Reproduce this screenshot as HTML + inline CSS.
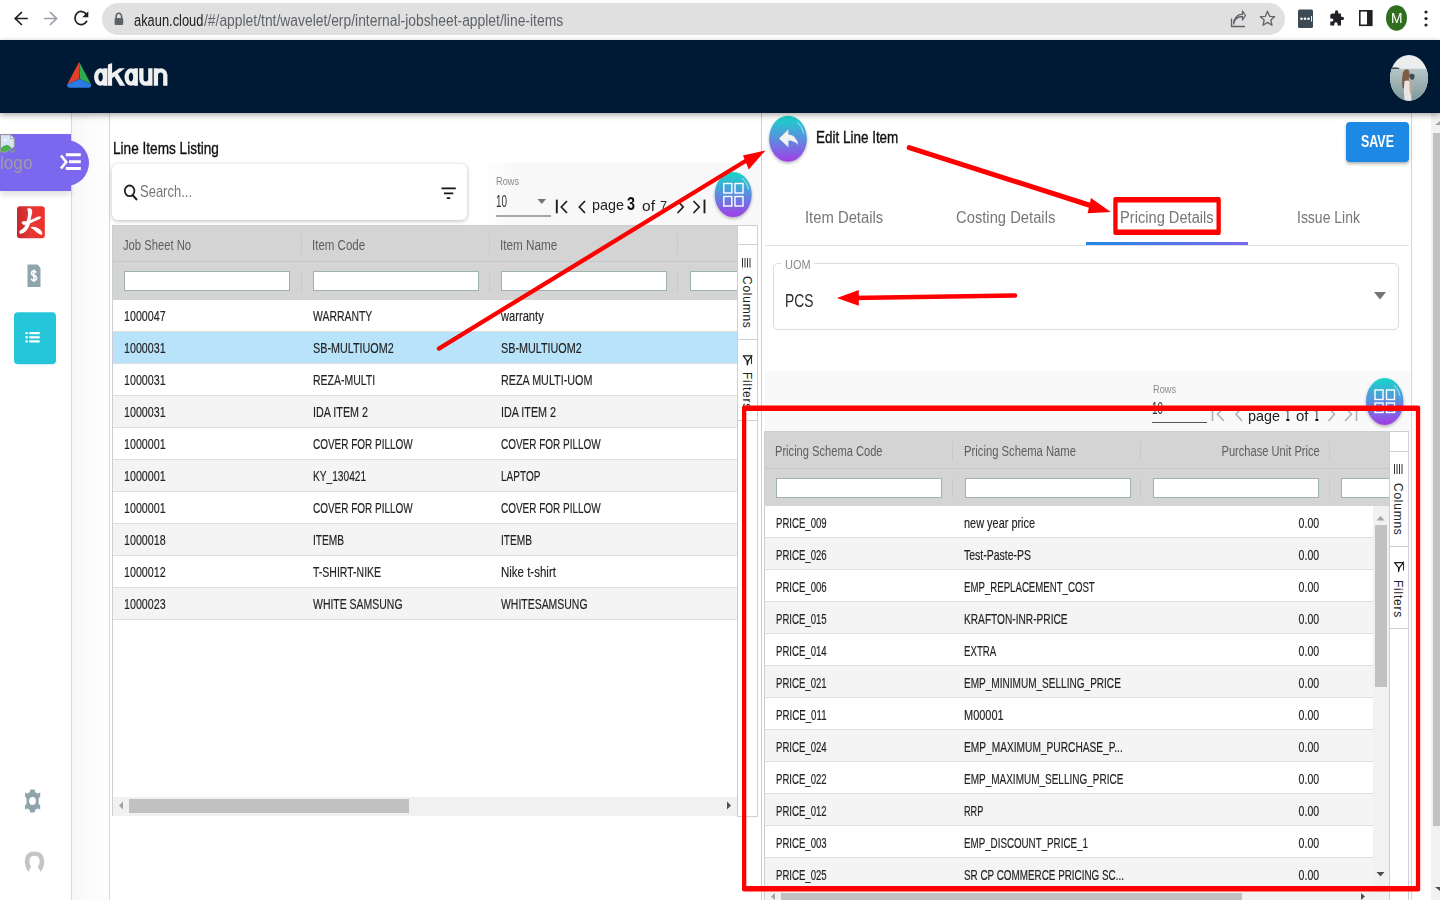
<!DOCTYPE html><html><head><meta charset="utf-8"><style>
html,body{margin:0;padding:0;width:1440px;height:900px;overflow:hidden;background:#fff;}
body{position:relative;font-family:"Liberation Sans",sans-serif;}
body div{position:absolute;box-sizing:border-box;}
.t{white-space:nowrap;transform-origin:left top;}
svg{position:absolute;overflow:visible;}
</style></head><body>
<div style="left:0px;top:0px;width:1440px;height:40px;background:#fff;"></div>
<svg style="left:0;top:0" width="1440" height="40" viewBox="0 0 1440 40">
<g fill="none" stroke-linecap="square">
<path d="M27 18.5H15.5M21.3 12.6L15.2 18.5L21.3 24.4" stroke="#202124" stroke-width="1.7"/>
<path d="M44.8 18.5H56.3M50.5 12.6L56.6 18.5L50.5 24.4" stroke="#9aa0a6" stroke-width="1.7"/>
<path d="M86.5 21.5A6.2 6.6 0 1 1 86.4 14.5" stroke="#202124" stroke-width="1.7"/>
</g>
<path d="M88.3 11.3V17.3H82.3Z" fill="#202124"/>
</svg>
<div style="left:102px;top:3px;width:1183px;height:32px;background:#e0e0e0;border-radius:16px;"></div>
<svg style="left:0;top:0" width="1440" height="40" viewBox="0 0 1440 40">
<rect x="114.6" y="18" width="8.6" height="7" rx="1" fill="#5f6368"/>
<path d="M116.2 18.5V16.3A2.7 3 0 0 1 121.6 16.3V18.5" fill="none" stroke="#5f6368" stroke-width="1.6"/>
</svg>
<div class="t" style="left:134.00px;top:11.50px;font-size:16.42px;line-height:16.42px;color:#202124;transform:scaleX(0.7846);">akaun.cloud</div>
<div class="t" style="left:203.80px;top:11.50px;font-size:16.42px;line-height:16.42px;color:#5f6368;transform:scaleX(0.8450);">/#/applet/tnt/wavelet/erp/internal-jobsheet-applet/line-items</div>
<svg style="left:0;top:0" width="1440" height="40" viewBox="0 0 1440 40">
<g fill="none" stroke="#5f6368" stroke-width="1.3">
<path d="M1231.5 18.5V26.5H1245"/>
<path d="M1233.5 24C1234.5 19 1238 16.5 1242.5 16.5V20L1245.5 15.5L1242.5 11V14.2C1237 14.5 1234 18.5 1233.5 24Z" stroke-linejoin="round"/>
<path d="M1267.5 11.2L1269.6 16.3L1274.6 16.7L1270.8 20L1272 25.3L1267.5 22.4L1263 25.3L1264.2 20L1260.4 16.7L1265.4 16.3Z" stroke-linejoin="round"/>
</g>
<rect x="1298" y="9.5" width="15" height="18.5" rx="1.5" fill="#3c4a55"/>
<circle cx="1301.5" cy="18.8" r="1.3" fill="#fff"/><circle cx="1305" cy="18.8" r="1.3" fill="#fff"/><circle cx="1308.5" cy="18.8" r="1.3" fill="#fff"/>
<rect x="1311" y="16" width="0.9" height="5.5" fill="#fff"/>
<path d="M1332 13.5H1335V11.8A1.6 1.6 0 0 1 1338.2 11.8V13.5H1341V16.8H1342.4A1.6 1.6 0 0 1 1342.4 20H1341V25.5H1337.5V23.8A1.6 1.6 0 0 0 1334.3 23.8V25.5H1330.3V21.6H1331.8A1.6 1.6 0 0 0 1331.8 18.4H1330.3V14.8Z" fill="#202124"/>
<rect x="1359.8" y="10.8" width="12" height="14.5" fill="none" stroke="#202124" stroke-width="1.6"/>
<rect x="1367" y="10.8" width="4.8" height="14.5" fill="#202124"/>
<ellipse cx="1396.5" cy="18" rx="10.5" ry="12.8" fill="#2f6e1f"/>
<circle cx="1426" cy="12" r="1.6" fill="#202124"/><circle cx="1426" cy="18.5" r="1.6" fill="#202124"/><circle cx="1426" cy="25" r="1.6" fill="#202124"/>
</svg>
<div class="t" style="left:1390.50px;top:12.01px;font-size:13.81px;line-height:13.81px;color:#fff;transform:scaleX(0.9998);">M</div>
<div style="left:0px;top:40px;width:1440px;height:73px;background:#001a35;box-shadow:0 2px 6px rgba(0,0,0,.35);z-index:2;"></div>
<svg style="left:0;top:0;z-index:3" width="1440" height="120" viewBox="0 0 1440 120">
<path d="M79.2 61.8L67.3 84.2L79 79Z" fill="#e0402a"/>
<path d="M79.2 61.8L91 84.2L79.6 79Z" fill="#2fa84f"/>
<path d="M67.3 84.2Q66.8 87.8 70 87.8H88.6Q91.6 87.8 91 84.2L79.4 79Z" fill="#2c7be5"/>
<defs><clipPath id="avc"><ellipse cx="1409" cy="77.9" rx="19" ry="22.9"/></clipPath>
<linearGradient id="sea" x1="0" y1="0" x2="0" y2="1"><stop offset="0" stop-color="#b6c6c8"/><stop offset="1" stop-color="#7b9598"/></linearGradient></defs>
<g clip-path="url(#avc)">
<rect x="1389" y="54" width="40" height="48" fill="#eceeed"/>
<rect x="1389" y="68.8" width="40" height="34" fill="url(#sea)"/>
<path d="M1391 69H1400Q1399 67.2 1396.5 67.5Q1394 67 1391 68Z" fill="#40524f"/>
<path d="M1402.5 88Q1401.5 78 1403 72Q1405 68.5 1408 69.5Q1410 71 1409.5 76L1408 84Q1406 90 1402.5 88Z" fill="#7d5e45"/>
<path d="M1404.5 81Q1408 79.5 1410.5 82L1411 92L1411.5 101H1404.5L1403.8 90Z" fill="#e9e5e6"/>
<path d="M1409.3 75Q1412 72.5 1414.5 75Q1415 78.5 1412.5 80Q1409.5 79.5 1409.3 75Z" fill="#3e4c4e"/>
<path d="M1409.5 80.5Q1412.5 80 1412.3 86L1411.5 96Q1409.5 94 1409.5 86Z" fill="#c4a48c"/>
</g>
</svg>
<svg style="left:0;top:0;z-index:3" width="200" height="120" viewBox="0 0 200 120">
<g fill="none" stroke="#f0f0f0" stroke-width="4.3">
<ellipse cx="100.6" cy="77.05" rx="4.4" ry="6.6"/>
<ellipse cx="131" cy="77.05" rx="4.4" ry="6.6"/>
<path d="M141.35 68.3V79.2A4.5 4.5 0 0 0 150.35 79.2M150.35 68.3V85.8"/>
<path d="M155.9 68.3V85.8M155.9 75A4.7 4.7 0 0 1 165.3 75V85.8"/>
</g>
<g fill="#f0f0f0">
<rect x="103.2" y="68.3" width="4.3" height="17.5"/>
<rect x="133.6" y="68.3" width="4.3" height="17.5"/>
<path d="M107.9 64.6L112.1 62.9V85.8H107.9Z"/>
<path d="M110.5 79.5V74.3L119.3 68.3H125Z"/>
<path d="M114.3 76.2L117.6 73.2L125.3 85.8H119.9Z"/>
</g>
</svg>
<div style="left:0px;top:112px;width:72px;height:788px;background:#fff;border-right:1px solid #d9d9d9;"></div>
<div style="left:72px;top:112px;width:37px;height:788px;background:linear-gradient(90deg,#f7f7f7,#fbfbfb 40%,#fefefe);"></div>
<div style="left:109px;top:112px;width:1px;height:788px;background:#d9d9d9;"></div>
<div style="left:0px;top:134px;width:71px;height:57px;background:#7b68ee;box-shadow:0 4px 6px rgba(0,0,0,.12);"></div>
<div style="left:43px;top:139.5px;width:46px;height:46px;border-radius:50%;background:#7b68ee;"></div>
<svg style="left:0;top:0" width="120" height="400" viewBox="0 0 120 400">
<path d="M65.8 154.8H80.8M69 161.8H80.8M65.8 168.5H80.8" stroke="#fff" stroke-width="3"/>
<path d="M61 155.5L66.2 162L61 168.5" fill="none" stroke="#fff" stroke-width="2.7"/>
<path d="M0.5 134.7H10.6L14.3 138.6V147L6 152.1H0.5Z" fill="#d6e4f5" stroke="#9a9a9a" stroke-width="1"/>
<path d="M10.6 134.7V138.6H14.3Z" fill="#f4f4f4" stroke="#9a9a9a" stroke-width="0.8"/>
<path d="M3 140.5Q5 137.5 7.5 140.5Z" fill="#fff"/>
<path d="M1 151.8V148Q4 144.5 7.5 145Q10 145.5 11.5 148.2L6 151.8Z" fill="#4caf50"/>
<path d="M10.5 152.1L14.3 149.5V152.1Z" fill="#4caf50" stroke="#9a9a9a" stroke-width="0.7"/>

</svg>
<div class="t" style="left:-0.50px;top:153.59px;font-size:18.38px;line-height:18.38px;color:#9e9e9e;transform:scaleX(0.9352);">logo</div>
<svg style="left:0;top:0" width="120" height="900" viewBox="0 0 120 900">
<defs><linearGradient id="rg" x1="0" x2="1"><stop offset="0" stop-color="#c62828"/><stop offset=".5" stop-color="#e53935"/><stop offset="1" stop-color="#f0302a"/></linearGradient></defs>
<rect x="17" y="206.2" width="27.8" height="32.1" rx="3" fill="url(#rg)"/>
<path d="M28 209C30.5 208.2 32 210 31.5 212.5C31.2 214.5 30.5 216 30.2 218C30 222 28.5 227 26 230C24.5 231.8 22.5 233.2 20.2 233C19.8 231.5 20.5 230.5 22 230.2C24.5 229 26.5 225 27.5 221C28.2 218 28.8 215 28.8 213C28.6 211.2 28 210 28 209Z" fill="#fff" stroke="#fff" stroke-width="1.3"/>
<path d="M22 222.5C22.5 221.2 24 221.5 25.5 221.8C29 221.5 34 219 37 217.5C38.8 216.6 40.5 216.5 40.8 217.3C40.5 218.5 38.5 219.2 36.5 220C33 221.5 29 223.5 26 224.5C24 225 22.5 224.5 22 222.5Z" fill="#fff" stroke="#fff" stroke-width="0.9"/>
<path d="M31.6 227.5C34 227 37.5 228 40 230.2C41.5 231.5 42 233 41.8 234.3C40.5 234.5 39 233.5 37.5 232.3C35.5 230.5 33.5 229 31.6 227.5Z" fill="#fff" stroke="#fff" stroke-width="1.1"/>
<path d="M27.5 264.5H37.5L40.5 268V287H27.5Z" fill="#90a4ae"/>
<path d="M36.3 272.6Q35.5 271 33.8 271Q31.5 271 31.5 273.2Q31.5 275 34 275.5Q36.5 276 36.5 278.3Q36.5 280.5 33.8 280.5Q32 280.5 31.2 278.8M33.9 269.5V282" fill="none" stroke="#fff" stroke-width="1.6"/>
<rect x="14" y="312.3" width="42" height="52" rx="4" fill="#26c6da"/>
<g fill="#fff"><rect x="25.5" y="332" width="2.2" height="2.2"/><rect x="25.5" y="336.2" width="2.2" height="2.2"/><rect x="25.5" y="340.3" width="2.2" height="2.2"/>
<rect x="29.3" y="332" width="10.4" height="2.2"/><rect x="29.3" y="336.2" width="10.4" height="2.2"/><rect x="29.3" y="340.3" width="10.4" height="2.2"/></g>
<path d="M30.3 789.5H34.6L35.2 792.2L37.6 793.6L40.2 792.6V796.8L38.6 798.2V803.8L40.2 805.2V809.6L37.6 808.6L35.2 810L34.6 812.6H30.3L29.7 810L27.3 808.6L25 809.6V805.5L26.5 803.8V798.2L25 796.5V792.6L27.3 793.6L29.7 792.2Z" fill="#90a4ae"/>
<ellipse cx="32.5" cy="801" rx="3.4" ry="4" fill="#fff"/>
<path d="M28.5 871.8Q24.8 867.5 24.8 861.5Q25 851.6 34.5 851.6Q44 851.6 44.2 861.5Q44.2 867.5 40.5 871.8L37.8 866.8Q39.8 864.5 39.6 860.8Q39.2 855.8 34.5 855.8Q29.8 855.8 29.4 860.8Q29.2 864.5 31.2 866.8Z" fill="#c4c4c4"/>
</svg>
<div class="t" style="left:112.50px;top:139.78px;font-size:17.15px;line-height:17.15px;color:#111;transform:scaleX(0.7942);-webkit-text-stroke:0.35px #111;">Line Items Listing</div>
<div style="left:112px;top:164px;width:355px;height:56px;background:#fff;border-radius:6px;box-shadow:0 1px 4px rgba(0,0,0,.28);"></div>
<svg style="left:0;top:0" width="760" height="240" viewBox="0 0 760 240">
<ellipse cx="129.6" cy="190.8" rx="4.8" ry="5.3" fill="none" stroke="#222" stroke-width="1.8"/>
<path d="M132.6 195L137 200" stroke="#222" stroke-width="2"/>
<path d="M441.5 188.4H455.8M444 193.3H453.3M446.8 198.1H450.2" stroke="#151515" stroke-width="1.8"/>
</svg>
<div class="t" style="left:140.00px;top:184.47px;font-size:15.99px;line-height:15.99px;color:#777;transform:scaleX(0.8127);">Search...</div>
<div style="left:480px;top:163px;width:280px;height:62px;background:linear-gradient(90deg,#fff,#f8f8f8 12%,#f8f8f8);"></div>
<div class="t" style="left:496.00px;top:175.95px;font-size:11.05px;line-height:11.05px;color:#8a8a8a;transform:scaleX(0.8327);">Rows</div>
<div class="t" style="left:496.00px;top:193.55px;font-size:16.72px;line-height:16.72px;color:#333;transform:scaleX(0.5916);">10</div>
<div style="left:496px;top:215.3px;width:55px;height:1.6px;background:#a8a8a8;"></div>
<svg style="left:0;top:0" width="760" height="240" viewBox="0 0 760 240">
<path d="M537.5 199H546L541.8 204Z" fill="#757575"/>
<g fill="none" stroke="#1e1e1e" stroke-width="1.9">
<path d="M556.8 199.6V213.3"/><path d="M567 201L561.3 207L567 213" stroke-width="1.7"/>
<path d="M585 201L579.3 207L585 213" stroke-width="1.7"/>
<path d="M677.5 201L683.2 207L677.5 213" stroke-width="1.7"/>
<path d="M693.5 201L699.2 207L693.5 213" stroke-width="1.7"/><path d="M704.5 199.6V213.3"/>
</g>
</svg>
<div class="t" style="left:592.00px;top:198.43px;font-size:14.97px;line-height:14.97px;color:#222;transform:scaleX(0.9608);">page</div>
<div class="t" style="left:627.00px;top:196.34px;font-size:17.44px;line-height:17.44px;color:#111;font-weight:700;transform:scaleX(0.8247);">3</div>
<div class="t" style="left:642.00px;top:198.92px;font-size:14.39px;line-height:14.39px;color:#222;transform:scaleX(1.0833);">of</div>
<div class="t" style="left:660.00px;top:198.55px;font-size:14.83px;line-height:14.83px;color:#222;transform:scaleX(0.8489);">7</div>
<svg style="left:0;top:0" width="760" height="240" viewBox="0 0 760 240">
<defs><linearGradient id="fg" x1="0" y1="0" x2="0" y2="1"><stop offset="0" stop-color="#14d8c8"/><stop offset=".5" stop-color="#5b8ee0"/><stop offset="1" stop-color="#a23de6"/></linearGradient>
<filter id="sh" x="-30%" y="-30%" width="160%" height="160%"><feDropShadow dx="0" dy="1.5" stdDeviation="1.5" flood-color="#000" flood-opacity=".3"/></filter></defs>
<ellipse cx="733.2" cy="194.6" rx="18.5" ry="22.5" fill="url(#fg)" filter="url(#sh)"/>
<g fill="none" stroke="#fff" stroke-width="1.4">
<rect x="723.8" y="183.5" width="8" height="9.5"/><rect x="735" y="183.5" width="8" height="9.5"/>
<rect x="723.8" y="196.5" width="8" height="9.5"/><rect x="735" y="196.5" width="8" height="9.5"/>
</g>
<path d="M742.4 178.2A16 20 0 0 1 748.7 189.4" fill="none" stroke="#fff" stroke-opacity=".7" stroke-width="0.9"/>
</svg>
<div style="left:112px;top:225px;width:626px;height:591px;background:#fff;border:1px solid #c9cfd2;border-right:none;"></div>
<div style="left:113px;top:225.5px;width:625px;height:36.5px;background:#d4d4d4;border-bottom:1px solid #c3c8ca;"></div>
<div style="left:113px;top:262px;width:625px;height:37.5px;background:#d4d4d4;"></div>
<div style="left:301px;top:234px;width:1px;height:20px;background:#c5cacc;"></div>
<div style="left:301px;top:272px;width:1px;height:20px;background:#c5cacc;"></div>
<div style="left:489px;top:234px;width:1px;height:20px;background:#c5cacc;"></div>
<div style="left:489px;top:272px;width:1px;height:20px;background:#c5cacc;"></div>
<div style="left:677px;top:234px;width:1px;height:20px;background:#c5cacc;"></div>
<div style="left:677px;top:272px;width:1px;height:20px;background:#c5cacc;"></div>
<div class="t" style="left:123.20px;top:237.64px;font-size:14.24px;line-height:14.24px;color:#5e5e5e;transform:scaleX(0.7898);">Job Sheet No</div>
<div class="t" style="left:312.00px;top:237.64px;font-size:14.24px;line-height:14.24px;color:#5e5e5e;transform:scaleX(0.8094);">Item Code</div>
<div class="t" style="left:500.20px;top:237.64px;font-size:14.24px;line-height:14.24px;color:#5e5e5e;transform:scaleX(0.8236);">Item Name</div>
<div style="left:124px;top:270.5px;width:166px;height:20.2px;background:#fff;border:1px solid #9fb1b1;"></div>
<div style="left:313px;top:270.5px;width:166px;height:20.2px;background:#fff;border:1px solid #9fb1b1;"></div>
<div style="left:501px;top:270.5px;width:166px;height:20.2px;background:#fff;border:1px solid #9fb1b1;"></div>
<div style="left:690px;top:270.5px;width:60px;height:20.2px;background:#fff;border:1px solid #9fb1b1;"></div>
<div style="left:113px;top:299.5px;width:625px;height:32px;background:#fff;border-bottom:1px solid #dedede;"></div>
<div class="t" style="left:124.30px;top:309.59px;font-size:13.95px;line-height:13.95px;color:#222;transform:scaleX(0.7661);-webkit-text-stroke:0.15px #222;">1000047</div>
<div class="t" style="left:312.60px;top:309.59px;font-size:13.95px;line-height:13.95px;color:#222;transform:scaleX(0.7476);-webkit-text-stroke:0.15px #222;">WARRANTY</div>
<div class="t" style="left:500.80px;top:309.59px;font-size:13.95px;line-height:13.95px;color:#222;transform:scaleX(0.7991);-webkit-text-stroke:0.15px #222;">warranty</div>
<div style="left:113px;top:331.5px;width:625px;height:32px;background:#b8e3fb;border-bottom:1px solid #dedede;"></div>
<div class="t" style="left:124.30px;top:341.59px;font-size:13.95px;line-height:13.95px;color:#222;transform:scaleX(0.7661);-webkit-text-stroke:0.15px #222;">1000031</div>
<div class="t" style="left:312.60px;top:341.59px;font-size:13.95px;line-height:13.95px;color:#222;transform:scaleX(0.7740);-webkit-text-stroke:0.15px #222;">SB-MULTIUOM2</div>
<div class="t" style="left:500.80px;top:341.59px;font-size:13.95px;line-height:13.95px;color:#222;transform:scaleX(0.7740);-webkit-text-stroke:0.15px #222;">SB-MULTIUOM2</div>
<div style="left:113px;top:363.5px;width:625px;height:32px;background:#fff;border-bottom:1px solid #dedede;"></div>
<div class="t" style="left:124.30px;top:373.59px;font-size:13.95px;line-height:13.95px;color:#222;transform:scaleX(0.7661);-webkit-text-stroke:0.15px #222;">1000031</div>
<div class="t" style="left:312.60px;top:373.59px;font-size:13.95px;line-height:13.95px;color:#222;transform:scaleX(0.7531);-webkit-text-stroke:0.15px #222;">REZA-MULTI</div>
<div class="t" style="left:500.80px;top:373.59px;font-size:13.95px;line-height:13.95px;color:#222;transform:scaleX(0.7729);-webkit-text-stroke:0.15px #222;">REZA MULTI-UOM</div>
<div style="left:113px;top:395.5px;width:625px;height:32px;background:#f4f4f4;border-bottom:1px solid #dedede;"></div>
<div class="t" style="left:124.30px;top:405.59px;font-size:13.95px;line-height:13.95px;color:#222;transform:scaleX(0.7661);-webkit-text-stroke:0.15px #222;">1000031</div>
<div class="t" style="left:312.60px;top:405.59px;font-size:13.95px;line-height:13.95px;color:#222;transform:scaleX(0.7728);-webkit-text-stroke:0.15px #222;">IDA ITEM 2</div>
<div class="t" style="left:500.80px;top:405.59px;font-size:13.95px;line-height:13.95px;color:#222;transform:scaleX(0.7728);-webkit-text-stroke:0.15px #222;">IDA ITEM 2</div>
<div style="left:113px;top:427.5px;width:625px;height:32px;background:#fff;border-bottom:1px solid #dedede;"></div>
<div class="t" style="left:124.30px;top:437.59px;font-size:13.95px;line-height:13.95px;color:#222;transform:scaleX(0.7661);-webkit-text-stroke:0.15px #222;">1000001</div>
<div class="t" style="left:312.60px;top:437.59px;font-size:13.95px;line-height:13.95px;color:#222;transform:scaleX(0.7154);-webkit-text-stroke:0.15px #222;">COVER FOR PILLOW</div>
<div class="t" style="left:500.80px;top:437.59px;font-size:13.95px;line-height:13.95px;color:#222;transform:scaleX(0.7154);-webkit-text-stroke:0.15px #222;">COVER FOR PILLOW</div>
<div style="left:113px;top:459.5px;width:625px;height:32px;background:#f4f4f4;border-bottom:1px solid #dedede;"></div>
<div class="t" style="left:124.30px;top:469.59px;font-size:13.95px;line-height:13.95px;color:#222;transform:scaleX(0.7661);-webkit-text-stroke:0.15px #222;">1000001</div>
<div class="t" style="left:312.60px;top:469.59px;font-size:13.95px;line-height:13.95px;color:#222;transform:scaleX(0.7285);-webkit-text-stroke:0.15px #222;">KY_130421</div>
<div class="t" style="left:500.80px;top:469.59px;font-size:13.95px;line-height:13.95px;color:#222;transform:scaleX(0.7189);-webkit-text-stroke:0.15px #222;">LAPTOP</div>
<div style="left:113px;top:491.5px;width:625px;height:32px;background:#fff;border-bottom:1px solid #dedede;"></div>
<div class="t" style="left:124.30px;top:501.59px;font-size:13.95px;line-height:13.95px;color:#222;transform:scaleX(0.7661);-webkit-text-stroke:0.15px #222;">1000001</div>
<div class="t" style="left:312.60px;top:501.59px;font-size:13.95px;line-height:13.95px;color:#222;transform:scaleX(0.7154);-webkit-text-stroke:0.15px #222;">COVER FOR PILLOW</div>
<div class="t" style="left:500.80px;top:501.59px;font-size:13.95px;line-height:13.95px;color:#222;transform:scaleX(0.7154);-webkit-text-stroke:0.15px #222;">COVER FOR PILLOW</div>
<div style="left:113px;top:523.5px;width:625px;height:32px;background:#f4f4f4;border-bottom:1px solid #dedede;"></div>
<div class="t" style="left:124.30px;top:533.59px;font-size:13.95px;line-height:13.95px;color:#222;transform:scaleX(0.7661);-webkit-text-stroke:0.15px #222;">1000018</div>
<div class="t" style="left:312.60px;top:533.59px;font-size:13.95px;line-height:13.95px;color:#222;transform:scaleX(0.7287);-webkit-text-stroke:0.15px #222;">ITEMB</div>
<div class="t" style="left:500.80px;top:533.59px;font-size:13.95px;line-height:13.95px;color:#222;transform:scaleX(0.7287);-webkit-text-stroke:0.15px #222;">ITEMB</div>
<div style="left:113px;top:555.5px;width:625px;height:32px;background:#fff;border-bottom:1px solid #dedede;"></div>
<div class="t" style="left:124.30px;top:565.59px;font-size:13.95px;line-height:13.95px;color:#222;transform:scaleX(0.7661);-webkit-text-stroke:0.15px #222;">1000012</div>
<div class="t" style="left:312.60px;top:565.59px;font-size:13.95px;line-height:13.95px;color:#222;transform:scaleX(0.7535);-webkit-text-stroke:0.15px #222;">T-SHIRT-NIKE</div>
<div class="t" style="left:500.80px;top:565.59px;font-size:13.95px;line-height:13.95px;color:#222;transform:scaleX(0.8245);-webkit-text-stroke:0.15px #222;">Nike t-shirt</div>
<div style="left:113px;top:587.5px;width:625px;height:32px;background:#f4f4f4;border-bottom:1px solid #dedede;"></div>
<div class="t" style="left:124.30px;top:597.59px;font-size:13.95px;line-height:13.95px;color:#222;transform:scaleX(0.7661);-webkit-text-stroke:0.15px #222;">1000023</div>
<div class="t" style="left:312.60px;top:597.59px;font-size:13.95px;line-height:13.95px;color:#222;transform:scaleX(0.7507);-webkit-text-stroke:0.15px #222;">WHITE SAMSUNG</div>
<div class="t" style="left:500.80px;top:597.59px;font-size:13.95px;line-height:13.95px;color:#222;transform:scaleX(0.7500);-webkit-text-stroke:0.15px #222;">WHITESAMSUNG</div>
<div style="left:113px;top:797px;width:625px;height:19px;background:#f1f1f1;"></div>
<div style="left:129px;top:798.5px;width:280px;height:14.5px;background:#c1c1c1;"></div>
<svg style="left:0;top:0" width="760" height="900" viewBox="0 0 760 900">
<path d="M123 801.5V809.5L119 805.5Z" fill="#a3a3a3"/>
<path d="M727 801.5V809.5L731 805.5Z" fill="#505050"/>
</svg>
<div style="left:737px;top:225px;width:21px;height:592px;background:#fff;border:1px solid #c9cfd2;"></div>
<div style="left:738px;top:244px;width:19px;height:1px;background:#c9cfd2;"></div>
<div style="left:738px;top:339px;width:19px;height:1px;background:#c9cfd2;"></div>
<div style="left:738px;top:420px;width:19px;height:1px;background:#c9cfd2;"></div>
<svg style="left:0;top:0" width="760" height="900" viewBox="0 0 760 900">
<g stroke="#333" stroke-width="1"><path d="M742.5 258V267.5M745 258V267.5M747.5 258V267.5M750 258V267.5"/></g>
<path d="M743.3 355.8H751.9L748.3 360.8L747.3 365L747.1 360.8Z" fill="none" stroke="#1a1a1a" stroke-width="1.2" stroke-linejoin="round"/>
<path d="M751.5 355V364" stroke="#333" stroke-width="1.1"/>
</svg>
<div class="t" style="left:739.6px;top:276px;font-size:12px;line-height:12px;letter-spacing:0.75px;color:#222;transform-origin:0 0;transform:translate(13px,0) rotate(90deg);">Columns</div>
<div class="t" style="left:739.6px;top:372px;font-size:12px;line-height:12px;letter-spacing:0.75px;color:#222;transform-origin:0 0;transform:translate(13px,0) rotate(90deg);">Filters</div>
<div style="left:760.5px;top:112px;width:1.2px;height:788px;background:#cfcfcf;"></div>
<div style="left:1411px;top:112px;width:1px;height:788px;background:#d6d6d6;"></div>
<svg style="left:0;top:0" width="1440" height="900" viewBox="0 0 1440 900">
<defs><linearGradient id="fg2" x1="0" y1="0" x2="0" y2="1"><stop offset="0" stop-color="#14d8c8"/><stop offset=".5" stop-color="#5b8ee0"/><stop offset="1" stop-color="#a23de6"/></linearGradient>
<filter id="sh2" x="-30%" y="-30%" width="160%" height="160%"><feDropShadow dx="0" dy="1.5" stdDeviation="1.5" flood-color="#000" flood-opacity=".3"/></filter></defs>
<ellipse cx="788" cy="138.8" rx="18.9" ry="23" fill="url(#fg2)" filter="url(#sh2)"/>
<path d="M779 138.5L788.4 129.5V134.5Q796.5 135 798.2 145Q794.5 140.5 788.4 140.5V147.2Z" fill="#f2f2f2"/>
<path d="M797.4 122.4A16.4 20 0 0 1 803.8 133.6" fill="none" stroke="#fff" stroke-opacity=".7" stroke-width="0.9"/>
</svg>
<div class="t" style="left:816.00px;top:129.99px;font-size:15.84px;line-height:15.84px;color:#111;transform:scaleX(0.8506);-webkit-text-stroke:0.35px #111;">Edit Line Item</div>
<div style="left:1346px;top:121.8px;width:63px;height:40.7px;background:#1e88e5;border-radius:4px;box-shadow:0 2px 3px rgba(0,0,0,.3);"></div>
<div class="t" style="left:1361.00px;top:134.05px;font-size:16.72px;line-height:16.72px;color:#fff;font-weight:700;transform:scaleX(0.7453);">SAVE</div>
<div class="t" style="left:805.00px;top:210.19px;font-size:15.84px;line-height:15.84px;color:#777;transform:scaleX(0.9361);">Item Details</div>
<div class="t" style="left:955.60px;top:210.19px;font-size:15.84px;line-height:15.84px;color:#777;transform:scaleX(0.9329);">Costing Details</div>
<div class="t" style="left:1120.00px;top:210.19px;font-size:15.84px;line-height:15.84px;color:#777;transform:scaleX(0.9254);">Pricing Details</div>
<div class="t" style="left:1297.00px;top:210.19px;font-size:15.84px;line-height:15.84px;color:#777;transform:scaleX(0.8832);">Issue Link</div>
<div style="left:765px;top:245px;width:644px;height:1.3px;background:#e0e0e0;"></div>
<div style="left:1086px;top:242px;width:161.5px;height:3.3px;background:linear-gradient(90deg,#1e88e5,#7b68ee);"></div>
<div style="left:773px;top:262.5px;width:626px;height:67px;border:1px solid #dcdcdc;border-radius:5px;"></div>
<div style="left:781px;top:258px;width:33px;height:8px;background:#fff;"></div>
<div class="t" style="left:784.70px;top:259.45px;font-size:12.94px;line-height:12.94px;color:#8a8a8a;transform:scaleX(0.8449);">UOM</div>
<div class="t" style="left:784.50px;top:291.97px;font-size:18.46px;line-height:18.46px;color:#2a2a2a;transform:scaleX(0.7509);">PCS</div>
<svg style="left:0;top:0" width="1440" height="900" viewBox="0 0 1440 900">
<path d="M1374 292H1386L1380 299.5Z" fill="#757575"/>
</svg>
<div style="left:765px;top:371px;width:645px;height:60px;background:#f9f9f9;"></div>
<div class="t" style="left:1152.60px;top:383.57px;font-size:10.90px;line-height:10.90px;color:#8a8a8a;transform:scaleX(0.8438);">Rows</div>
<div class="t" style="left:1152.00px;top:400.55px;font-size:16.72px;line-height:16.72px;color:#333;transform:scaleX(0.5916);">10</div>
<div style="left:1152px;top:422px;width:55px;height:1.3px;background:#555;"></div>
<svg style="left:0;top:0" width="1440" height="900" viewBox="0 0 1440 900">
<path d="M1194 406H1200L1197 409.5Z" fill="#757575"/>
<g fill="none" stroke="#b0b0b0" stroke-width="1.6">
<path d="M1212.5 407V421M1224 407.5L1217.5 414.2L1224 421"/>
<path d="M1242 407.5L1236 414.2L1242 421"/>
<path d="M1328.5 407.5L1334.5 414.2L1328.5 421"/>
<path d="M1345 407.5L1351.5 414.2L1345 421M1356.5 407V421"/>
</g>
<ellipse cx="1384.7" cy="401.5" rx="18.7" ry="23.5" fill="url(#fg2)" filter="url(#sh2)"/>
<g fill="none" stroke="#fff" stroke-width="1.4">
<rect x="1375" y="390" width="8" height="9.5"/><rect x="1386.5" y="390" width="8" height="9.5"/>
<rect x="1375" y="403" width="8" height="9.5"/><rect x="1386.5" y="403" width="8" height="9.5"/>
</g>
<path d="M1393.9 385.1A16 20 0 0 1 1400.2 396.3" fill="none" stroke="#fff" stroke-opacity=".7" stroke-width="0.9"/>
</svg>
<div class="t" style="left:1248.00px;top:408.53px;font-size:14.97px;line-height:14.97px;color:#222;transform:scaleX(0.9608);">page</div>
<div class="t" style="left:1286.00px;top:406.54px;font-size:17.44px;line-height:17.44px;color:#111;font-weight:700;transform:scaleX(0.3608);">1</div>
<div class="t" style="left:1296.00px;top:408.92px;font-size:14.39px;line-height:14.39px;color:#222;transform:scaleX(1.0416);">of</div>
<div class="t" style="left:1315.00px;top:406.54px;font-size:17.44px;line-height:17.44px;color:#111;font-weight:700;transform:scaleX(0.3608);">1</div>
<div style="left:764px;top:431.3px;width:625px;height:470px;background:#fff;border-left:1px solid #c9cfd2;border-top:1px solid #c9cfd2;"></div>
<div style="left:765px;top:431.8px;width:624px;height:37.6px;background:#d4d4d4;border-bottom:1px solid #c3c8ca;"></div>
<div style="left:765px;top:469.4px;width:624px;height:36.3px;background:#d4d4d4;"></div>
<div style="left:952.4px;top:441px;width:1px;height:20px;background:#c5cacc;"></div>
<div style="left:952.4px;top:478px;width:1px;height:20px;background:#c5cacc;"></div>
<div style="left:1140px;top:441px;width:1px;height:20px;background:#c5cacc;"></div>
<div style="left:1140px;top:478px;width:1px;height:20px;background:#c5cacc;"></div>
<div style="left:1329px;top:441px;width:1px;height:20px;background:#c5cacc;"></div>
<div style="left:1329px;top:478px;width:1px;height:20px;background:#c5cacc;"></div>
<div class="t" style="left:775.20px;top:443.84px;font-size:14.24px;line-height:14.24px;color:#5e5e5e;transform:scaleX(0.7810);">Pricing Schema Code</div>
<div class="t" style="left:963.70px;top:443.84px;font-size:14.24px;line-height:14.24px;color:#5e5e5e;transform:scaleX(0.7909);">Pricing Schema Name</div>
<div class="t" style="left:1193.62px;top:443.84px;font-size:14.24px;line-height:14.24px;color:#5e5e5e;transform-origin:right top;transform:scaleX(0.7814);">Purchase Unit Price</div>
<div style="left:776px;top:478.3px;width:166px;height:19.6px;background:#fff;border:1px solid #9fb1b1;"></div>
<div style="left:964.5px;top:478.3px;width:166px;height:19.6px;background:#fff;border:1px solid #9fb1b1;"></div>
<div style="left:1153px;top:478.3px;width:165.5px;height:19.6px;background:#fff;border:1px solid #9fb1b1;"></div>
<div style="left:1341px;top:478.3px;width:60px;height:19.6px;background:#fff;border:1px solid #9fb1b1;"></div>
<div style="left:765px;top:505.7px;width:608px;height:32px;background:#fff;border-bottom:1px solid #dedede;"></div>
<div class="t" style="left:775.80px;top:516.59px;font-size:13.95px;line-height:13.95px;color:#222;transform:scaleX(0.6878);-webkit-text-stroke:0.15px #222;">PRICE_009</div>
<div class="t" style="left:964.30px;top:516.59px;font-size:13.95px;line-height:13.95px;color:#222;transform:scaleX(0.7842);-webkit-text-stroke:0.15px #222;">new year price</div>
<div class="t" style="left:1291.84px;top:516.59px;font-size:13.95px;line-height:13.95px;color:#222;transform-origin:right top;transform:scaleX(0.7582);-webkit-text-stroke:0.15px #222;">0.00</div>
<div style="left:765px;top:537.7px;width:608px;height:32px;background:#f4f4f4;border-bottom:1px solid #dedede;"></div>
<div class="t" style="left:775.80px;top:548.59px;font-size:13.95px;line-height:13.95px;color:#222;transform:scaleX(0.6878);-webkit-text-stroke:0.15px #222;">PRICE_026</div>
<div class="t" style="left:964.30px;top:548.59px;font-size:13.95px;line-height:13.95px;color:#222;transform:scaleX(0.7522);-webkit-text-stroke:0.15px #222;">Test-Paste-PS</div>
<div class="t" style="left:1291.84px;top:548.59px;font-size:13.95px;line-height:13.95px;color:#222;transform-origin:right top;transform:scaleX(0.7582);-webkit-text-stroke:0.15px #222;">0.00</div>
<div style="left:765px;top:569.7px;width:608px;height:32px;background:#fff;border-bottom:1px solid #dedede;"></div>
<div class="t" style="left:775.80px;top:580.59px;font-size:13.95px;line-height:13.95px;color:#222;transform:scaleX(0.6878);-webkit-text-stroke:0.15px #222;">PRICE_006</div>
<div class="t" style="left:964.30px;top:580.59px;font-size:13.95px;line-height:13.95px;color:#222;transform:scaleX(0.6919);-webkit-text-stroke:0.15px #222;">EMP_REPLACEMENT_COST</div>
<div class="t" style="left:1291.84px;top:580.59px;font-size:13.95px;line-height:13.95px;color:#222;transform-origin:right top;transform:scaleX(0.7582);-webkit-text-stroke:0.15px #222;">0.00</div>
<div style="left:765px;top:601.7px;width:608px;height:32px;background:#f4f4f4;border-bottom:1px solid #dedede;"></div>
<div class="t" style="left:775.80px;top:612.59px;font-size:13.95px;line-height:13.95px;color:#222;transform:scaleX(0.6878);-webkit-text-stroke:0.15px #222;">PRICE_015</div>
<div class="t" style="left:964.30px;top:612.59px;font-size:13.95px;line-height:13.95px;color:#222;transform:scaleX(0.7286);-webkit-text-stroke:0.15px #222;">KRAFTON-INR-PRICE</div>
<div class="t" style="left:1291.84px;top:612.59px;font-size:13.95px;line-height:13.95px;color:#222;transform-origin:right top;transform:scaleX(0.7582);-webkit-text-stroke:0.15px #222;">0.00</div>
<div style="left:765px;top:633.7px;width:608px;height:32px;background:#fff;border-bottom:1px solid #dedede;"></div>
<div class="t" style="left:775.80px;top:644.59px;font-size:13.95px;line-height:13.95px;color:#222;transform:scaleX(0.6878);-webkit-text-stroke:0.15px #222;">PRICE_014</div>
<div class="t" style="left:964.30px;top:644.59px;font-size:13.95px;line-height:13.95px;color:#222;transform:scaleX(0.6925);-webkit-text-stroke:0.15px #222;">EXTRA</div>
<div class="t" style="left:1291.84px;top:644.59px;font-size:13.95px;line-height:13.95px;color:#222;transform-origin:right top;transform:scaleX(0.7582);-webkit-text-stroke:0.15px #222;">0.00</div>
<div style="left:765px;top:665.7px;width:608px;height:32px;background:#f4f4f4;border-bottom:1px solid #dedede;"></div>
<div class="t" style="left:775.80px;top:676.59px;font-size:13.95px;line-height:13.95px;color:#222;transform:scaleX(0.6878);-webkit-text-stroke:0.15px #222;">PRICE_021</div>
<div class="t" style="left:964.30px;top:676.59px;font-size:13.95px;line-height:13.95px;color:#222;transform:scaleX(0.7206);-webkit-text-stroke:0.15px #222;">EMP_MINIMUM_SELLING_PRICE</div>
<div class="t" style="left:1291.84px;top:676.59px;font-size:13.95px;line-height:13.95px;color:#222;transform-origin:right top;transform:scaleX(0.7582);-webkit-text-stroke:0.15px #222;">0.00</div>
<div style="left:765px;top:697.7px;width:608px;height:32px;background:#fff;border-bottom:1px solid #dedede;"></div>
<div class="t" style="left:775.80px;top:708.59px;font-size:13.95px;line-height:13.95px;color:#222;transform:scaleX(0.6976);-webkit-text-stroke:0.15px #222;">PRICE_011</div>
<div class="t" style="left:964.30px;top:708.59px;font-size:13.95px;line-height:13.95px;color:#222;transform:scaleX(0.7864);-webkit-text-stroke:0.15px #222;">M00001</div>
<div class="t" style="left:1291.84px;top:708.59px;font-size:13.95px;line-height:13.95px;color:#222;transform-origin:right top;transform:scaleX(0.7582);-webkit-text-stroke:0.15px #222;">0.00</div>
<div style="left:765px;top:729.7px;width:608px;height:32px;background:#f4f4f4;border-bottom:1px solid #dedede;"></div>
<div class="t" style="left:775.80px;top:740.59px;font-size:13.95px;line-height:13.95px;color:#222;transform:scaleX(0.6878);-webkit-text-stroke:0.15px #222;">PRICE_024</div>
<div class="t" style="left:964.30px;top:740.59px;font-size:13.95px;line-height:13.95px;color:#222;transform:scaleX(0.7303);-webkit-text-stroke:0.15px #222;">EMP_MAXIMUM_PURCHASE_P...</div>
<div class="t" style="left:1291.84px;top:740.59px;font-size:13.95px;line-height:13.95px;color:#222;transform-origin:right top;transform:scaleX(0.7582);-webkit-text-stroke:0.15px #222;">0.00</div>
<div style="left:765px;top:761.7px;width:608px;height:32px;background:#fff;border-bottom:1px solid #dedede;"></div>
<div class="t" style="left:775.80px;top:772.59px;font-size:13.95px;line-height:13.95px;color:#222;transform:scaleX(0.6878);-webkit-text-stroke:0.15px #222;">PRICE_022</div>
<div class="t" style="left:964.30px;top:772.59px;font-size:13.95px;line-height:13.95px;color:#222;transform:scaleX(0.7168);-webkit-text-stroke:0.15px #222;">EMP_MAXIMUM_SELLING_PRICE</div>
<div class="t" style="left:1291.84px;top:772.59px;font-size:13.95px;line-height:13.95px;color:#222;transform-origin:right top;transform:scaleX(0.7582);-webkit-text-stroke:0.15px #222;">0.00</div>
<div style="left:765px;top:793.7px;width:608px;height:32px;background:#f4f4f4;border-bottom:1px solid #dedede;"></div>
<div class="t" style="left:775.80px;top:804.59px;font-size:13.95px;line-height:13.95px;color:#222;transform:scaleX(0.6878);-webkit-text-stroke:0.15px #222;">PRICE_012</div>
<div class="t" style="left:964.30px;top:804.59px;font-size:13.95px;line-height:13.95px;color:#222;transform:scaleX(0.6552);-webkit-text-stroke:0.15px #222;">RRP</div>
<div class="t" style="left:1291.84px;top:804.59px;font-size:13.95px;line-height:13.95px;color:#222;transform-origin:right top;transform:scaleX(0.7582);-webkit-text-stroke:0.15px #222;">0.00</div>
<div style="left:765px;top:825.7px;width:608px;height:32px;background:#fff;border-bottom:1px solid #dedede;"></div>
<div class="t" style="left:775.80px;top:836.59px;font-size:13.95px;line-height:13.95px;color:#222;transform:scaleX(0.6878);-webkit-text-stroke:0.15px #222;">PRICE_003</div>
<div class="t" style="left:964.30px;top:836.59px;font-size:13.95px;line-height:13.95px;color:#222;transform:scaleX(0.7012);-webkit-text-stroke:0.15px #222;">EMP_DISCOUNT_PRICE_1</div>
<div class="t" style="left:1291.84px;top:836.59px;font-size:13.95px;line-height:13.95px;color:#222;transform-origin:right top;transform:scaleX(0.7582);-webkit-text-stroke:0.15px #222;">0.00</div>
<div style="left:765px;top:857.7px;width:608px;height:32px;background:#f4f4f4;border-bottom:1px solid #dedede;"></div>
<div class="t" style="left:775.80px;top:868.59px;font-size:13.95px;line-height:13.95px;color:#222;transform:scaleX(0.6878);-webkit-text-stroke:0.15px #222;">PRICE_025</div>
<div class="t" style="left:964.30px;top:868.59px;font-size:13.95px;line-height:13.95px;color:#222;transform:scaleX(0.7083);-webkit-text-stroke:0.15px #222;">SR CP COMMERCE PRICING SC...</div>
<div class="t" style="left:1291.84px;top:868.59px;font-size:13.95px;line-height:13.95px;color:#222;transform-origin:right top;transform:scaleX(0.7582);-webkit-text-stroke:0.15px #222;">0.00</div>
<div style="left:1373px;top:505.7px;width:16px;height:390px;background:#f1f1f1;"></div>
<div style="left:1374.5px;top:525px;width:12.5px;height:162px;background:#c1c1c1;"></div>
<div style="left:765px;top:892px;width:624px;height:8px;background:#f1f1f1;"></div>
<div style="left:781px;top:892.5px;width:461px;height:7.5px;background:#c1c1c1;"></div>
<svg style="left:0;top:0" width="1440" height="900" viewBox="0 0 1440 900">
<path d="M1376.5 520.5H1384.5L1380.5 516Z" fill="#a3a3a3"/>
<path d="M1376.5 872H1384.5L1380.5 876.5Z" fill="#505050"/>
<path d="M775 893V900L771 896.5Z" fill="#a3a3a3"/>
<path d="M1361 893V900L1365 896.5Z" fill="#505050"/>
</svg>
<div style="left:1389px;top:431.3px;width:20px;height:470px;background:#fff;border-left:1px solid #c9cfd2;border-right:1px solid #c9cfd2;border-top:1px solid #c9cfd2;"></div>
<div style="left:1389.5px;top:450.7px;width:19px;height:1px;background:#c9cfd2;"></div>
<div style="left:1389.5px;top:545.5px;width:19px;height:1px;background:#c9cfd2;"></div>
<div style="left:1389.5px;top:627.7px;width:19px;height:1px;background:#c9cfd2;"></div>
<svg style="left:0;top:0" width="1440" height="900" viewBox="0 0 1440 900">
<g stroke="#333" stroke-width="1"><path d="M1394.5 464V474M1397 464V474M1399.5 464V474M1402 464V474"/></g>
<path d="M1394.6 562.7H1403.4L1399.5 567.6L1398.6 571.6L1398.5 567.6Z" fill="none" stroke="#1a1a1a" stroke-width="1.2" stroke-linejoin="round"/>
<path d="M1403.5 561.5V570.5" stroke="#333" stroke-width="1.1"/>
</svg>
<div class="t" style="left:1391.2px;top:483px;font-size:12px;line-height:12px;letter-spacing:0.75px;color:#222;transform-origin:0 0;transform:translate(13px,0) rotate(90deg);">Columns</div>
<div class="t" style="left:1391.2px;top:580px;font-size:12px;line-height:12px;letter-spacing:0.75px;color:#222;transform-origin:0 0;transform:translate(13px,0) rotate(90deg);">Filters</div>
<div style="left:1431.3px;top:112px;width:8.7px;height:788px;background:#f1f1f1;"></div>
<div style="left:1432.7px;top:132.7px;width:7.3px;height:693.8px;background:#c1c1c1;"></div>
<svg style="left:0;top:0" width="1440" height="900" viewBox="0 0 1440 900">
<path d="M1435 125H1440V121Z" fill="#a3a3a3"/>
<path d="M1435 887H1440V891Z" fill="#505050"/>
</svg>
<svg style="left:0;top:0;z-index:10" width="1440" height="900" viewBox="0 0 1440 900">
<g stroke="#ff0000" fill="none" stroke-linecap="round" stroke-linejoin="round">
<path d="M438.9 348.6L752 157" stroke-width="4.3"/>
<path d="M909.2 147.6L1092 206" stroke-width="5"/>
<path d="M1015 295.5L852 298" stroke-width="4.5"/>

</g>
<g fill="#ff0000">
<path fill-rule="evenodd" d="M1115.3 197H1218.8Q1220.8 197 1220.8 199V233Q1220.8 235 1218.8 235H1115.3Q1113.3 235 1113.3 233V199Q1113.3 197 1115.3 197ZM1117.6 202.5V229.6H1216.5V202.5Z"/>
<path fill-rule="evenodd" d="M744 405.6H1418.2Q1420.2 405.6 1420.2 407.6V889.4Q1420.2 891.4 1418.2 891.4H744Q742 891.4 742 889.4V407.6Q742 405.6 744 405.6ZM746.3 410.9V886H1415.9V410.9Z"/>
<path d="M765.5 150.4L743 155.5L748.8 169.5Z"/>
<path d="M1110.8 212L1091 198L1087.6 213.3Z"/>
<path d="M836.8 298L858.8 290L858.8 305.7Z"/>
</g>
</svg>
</body></html>
